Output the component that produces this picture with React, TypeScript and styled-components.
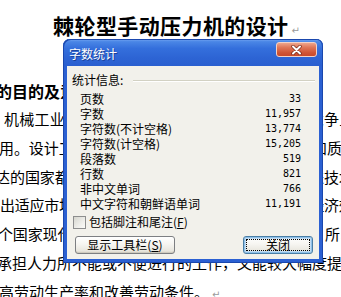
import React from 'react';
import styled, {createGlobalStyle} from 'styled-components';

const GlobalStyle = createGlobalStyle`
  html, body {
    margin: 0;
    padding: 0;
    background: #fff;
    overflow: hidden;
  }

  body {
    font-family: "Noto Sans CJK SC", "Noto Sans", sans-serif;
    color: #000;
  }
`

interface DocLine {
    text: string;
    indent: number;
    spacing?: number;
    bold?: boolean;
    mark?: boolean;
}

interface Stat {
    label: string;
    value: string;
}

const lines: Array<DocLine> = [
    {text: '的目的及意义', indent: -4, bold: true},
    {text: '机械工业是国民经济的基础，在国际市场激烈竞争上', indent: 4, spacing: 0.24},
    {text: '用。设计工作者应当不断提高机械产品设计水平和质量', indent: -1, spacing: -0.09},
    {text: '达的国家都十分重视机械工业的发展，并不断改进技术', indent: -5, spacing: -0.05},
    {text: '出适应市场需求的各种新型产品，以获得更好的经济效益', indent: 0, spacing: -0.27},
    {text: '个国家现代化水平的重要标志。压力机使用方便，所以能', indent: -2, spacing: -0.14},
    {text: '承担人力所不能或不便进行的工作，又能较大幅度提', indent: -3},
    {text: '高劳动生产率和改善劳动条件。', indent: -1, mark: true},
];

const stats: Array<Stat> = [
    {label: '页数', value: '33'},
    {label: '字数', value: '11,957'},
    {label: '字符数(不计空格)', value: '13,774'},
    {label: '字符数(计空格)', value: '15,205'},
    {label: '段落数', value: '519'},
    {label: '行数', value: '821'},
    {label: '非中文单词', value: '766'},
    {label: '中文字符和朝鲜语单词', value: '11,191'},
];

const CloseIcon = () => (
    <svg width="13" height="10" viewBox="0 0 13 10">
        <path d="M3 1.5 L10 8.5 M10 1.5 L3 8.5" stroke="#7a2a18" strokeWidth="3.4" strokeLinecap="round"/>
        <path d="M3 1.5 L10 8.5 M10 1.5 L3 8.5" stroke="#fff" strokeWidth="2" strokeLinecap="round"/>
    </svg>
);

export default function App() {
    return (
        <Page>
            <GlobalStyle/>
            <DocTitle>棘轮型手动压力机的设计<ReturnMark>↵</ReturnMark></DocTitle>
            <DocBody>
                {lines.map((line, i) => (
                    <Line key={i} $indent={line.indent} $spacing={line.spacing} $bold={line.bold}>
                        {line.text}
                        {line.mark && <ReturnMark>↵</ReturnMark>}
                    </Line>
                ))}
            </DocBody>

            <Dialog>
                <TitleBar>
                    <TitleText>字数统计</TitleText>
                    <CloseButton aria-label="关闭"><CloseIcon/></CloseButton>
                </TitleBar>
                <Body>
                    <SectionHeader>统计信息:</SectionHeader>
                    <Stats>
                        {stats.map((s) => (
                            <React.Fragment key={s.label}>
                                <StatLabel>{s.label}</StatLabel>
                                <StatValue>{s.value}</StatValue>
                            </React.Fragment>
                        ))}
                    </Stats>
                    <CheckRow>
                        <CheckBox/>
                        <span>包括脚注和尾注(<Key>F</Key>)</span>
                    </CheckRow>
                    <ButtonRow>
                        <Button $width={100}>显示工具栏(<Key>S</Key>)</Button>
                        <Button $width={70} $default>关闭</Button>
                    </ButtonRow>
                </Body>
            </Dialog>
        </Page>
    );
}

const Page = styled.div`
  position: relative;
  width: 341px;
  height: 297px;
  overflow: hidden;
  background: #fff;
`

const DocTitle = styled.h1`
  margin: 10px 0 0;
  padding-left: 12px;
  font-size: 21px;
  line-height: 30px;
  font-weight: 700;
  letter-spacing: 0.4px;
  text-align: center;
  white-space: nowrap;
`

const ReturnMark = styled.span`
  font-family: "DejaVu Sans", sans-serif;
  font-weight: 400;
  font-size: 10px;
  letter-spacing: 0;
  color: #9a9a9a;
  margin-left: 3px;
`

const DocBody = styled.div`
  margin-top: 30.6px;
`

const Line = styled.div<{ $indent: number; $spacing?: number; $bold?: boolean }>`
  margin-left: ${p => p.$indent}px;
  white-space: nowrap;
  font-size: ${p => p.$bold ? 16 : 15}px;
  font-weight: ${p => p.$bold ? 700 : 400};
  letter-spacing: ${p => p.$spacing ?? 0}px;
  line-height: 28.7px;
`

const Dialog = styled.div`
  position: absolute;
  left: 63px;
  top: 39px;
  width: 260px;
  height: 224px;
  box-sizing: border-box;
  display: flex;
  flex-direction: column;
  padding: 0 4px 4px;
  border-radius: 7px 7px 0 0;
  background: #2b60d2;
  box-shadow: inset 1px 0 0 #1a47ad, inset -1px 0 0 #1a47ad, inset 0 -1px 0 #1a47ad;
`

const TitleBar = styled.div`
  height: 27px;
  margin: 0 -4px;
  padding: 0 6px 0 6px;
  display: flex;
  align-items: flex-start;
  justify-content: space-between;
  border-radius: 7px 7px 0 0;
  background: linear-gradient(to bottom, #78a8f2 0%, #4a86e6 10%, #346fdc 35%, #2d64d4 70%, #2a5fd0 100%);
  box-shadow: inset 1px 1px 0 #1a47ad, inset -1px 0 0 #1a47ad;
`

const TitleText = styled.span`
  margin-top: 7px;
  font-size: 12px;
  line-height: 16px;
  color: #fff;
  text-shadow: 1px 1px 0 #1b3f96;
`

const CloseButton = styled.button`
  margin-top: 3px;
  width: 41px;
  height: 15px;
  padding: 0;
  display: flex;
  align-items: center;
  justify-content: center;
  border: 1px solid #f3d2c6;
  border-radius: 3px;
  background: linear-gradient(to bottom, #eea58b 0%, #df7657 35%, #cf5434 75%, #c8492b 100%);
`

const Body = styled.div`
  flex: 1;
  display: flex;
  flex-direction: column;
  padding: 6px 4px 5px 5px;
  background: #f2f1eb;
  font-size: 12px;
  line-height: 16px;
`

const SectionHeader = styled.div`
  display: flex;
  align-items: center;
  gap: 10px;
  height: 16px;

  &::after {
    content: '';
    flex: 1;
    height: 1px;
    background: #d2d1c3;
    box-shadow: 0 1px 0 #fff;
  }
`

const Stats = styled.div`
  margin: 3px 14px 0 8px;
  display: grid;
  grid-template-columns: 1fr auto;
  grid-auto-rows: 15px;
  align-items: center;
`

const StatLabel = styled.span`
  line-height: 15px;
  white-space: nowrap;
`

const StatValue = styled.span`
  font-family: "DejaVu Sans Mono", "Liberation Mono", monospace;
  font-size: 10px;
  line-height: 15px;
  text-align: right;
`

const CheckRow = styled.label`
  display: flex;
  align-items: center;
  gap: 3px;
  height: 16px;
  margin: 3px 0 0 1px;
`

const CheckBox = styled.span`
  width: 13px;
  height: 13px;
  box-sizing: border-box;
  border: 1px solid #8d8e8e;
  background: linear-gradient(135deg, #d6d6cf 0%, #eeeeea 60%, #fbfbf8 100%);
`

const Key = styled.span`
  text-decoration: underline;
`

const ButtonRow = styled.div`
  display: flex;
  justify-content: space-between;
  margin: 6px 2px 0 3px;
`

const Button = styled.button<{ $width: number; $default?: boolean }>`
  position: relative;
  width: ${p => p.$width}px;
  height: 18px;
  padding: 0;
  font-family: "Noto Sans CJK SC", sans-serif;
  font-size: 12px;
  line-height: 16px;
  color: #000;
  border: 1px solid ${p => p.$default ? '#4b7fa6' : '#7d7f82'};
  border-radius: 3px;
  background: linear-gradient(to bottom, #ffffff 0%, #f6f5f1 45%, #e9e7df 85%, #d8d4ca 100%);
  box-shadow: ${p => p.$default
    ? 'inset 0 0 0 1px #8ec0e8, inset 0 0 0 2px #c3dcf2'
    : 'inset 0 -1px 0 #cfcbbf'};

  &::after {
    content: '';
    display: ${p => p.$default ? 'block' : 'none'};
    position: absolute;
    inset: 2px 2px 2px 2px;
    border: 1px dotted #000;
  }
`
